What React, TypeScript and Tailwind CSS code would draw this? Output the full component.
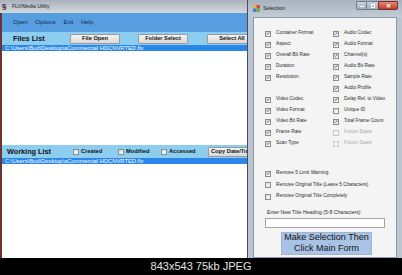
import React from 'react'

type Item = { label: string; checked?: boolean; disabled?: boolean } | null

const leftCol: Item[] = [
  { label: 'Container Format', checked: true },
  { label: 'Aspect', checked: true },
  { label: 'Overall Bit Rate', checked: true },
  { label: 'Duration', checked: true },
  { label: 'Resolution', checked: true },
  null,
  { label: 'Video Codec', checked: true },
  { label: 'Video Format', checked: true },
  { label: 'Video Bit Rate', checked: true },
  { label: 'Frame Rate', checked: true },
  { label: 'Scan Type', checked: true },
]

const rightCol: Item[] = [
  { label: 'Audio Codec', checked: true },
  { label: 'Audio Format', checked: true },
  { label: 'Channel(s)', checked: true },
  { label: 'Audio Bit Rate', checked: true },
  { label: 'Sample Rate', checked: true },
  { label: 'Audio Profile', checked: true },
  { label: 'Delay Rel. to Video', checked: true },
  { label: 'Unique ID' },
  { label: 'Total Frame Count', checked: true },
  { label: 'Future Spare', disabled: true },
  { label: 'Future Spare', disabled: true },
]

const path = 'C:\\Users\\Bud\\Desktop\\aCommercial HDCNVRTED.flv'

function Box({ checked, disabled }: { checked?: boolean; disabled?: boolean }) {
  return (
    <span
      className={`flex h-[6px] w-[6px] shrink-0 items-center justify-center border ${
        disabled ? 'border-[#c8c8c8] bg-[#f4f4f4]' : 'border-[#8c8c8c] bg-gradient-to-br from-[#dcdcdc] to-white'
      }`}
    >
      {checked && (
        <svg viewBox="0 0 6 6" className="h-[5px] w-[5px]">
          <path d="M1 3.1 L2.4 4.6 L5 1.2" stroke="#2f3d58" strokeWidth="1.1" fill="none" />
        </svg>
      )}
    </span>
  )
}

function Check({ item }: { item: Item }) {
  if (!item) return <div className="h-[11px]" />
  return (
    <div className="flex h-[11px] items-center gap-[5px]">
      <Box checked={item.checked} disabled={item.disabled} />
      <span className={`text-[4.8px] leading-none ${item.disabled ? 'text-[#a8a8a8]' : 'text-[#2b2b2b]'}`}>{item.label}</span>
    </div>
  )
}

function WinButton({ label, className }: { label: string; className: string }) {
  return (
    <div
      className={`flex h-[10px] shrink-0 items-center justify-center rounded-[1px] border border-[#9a9a9a] bg-gradient-to-b from-[#f4f4f4] to-[#d9d9d9] text-[5.7px] font-bold text-[#111] ${className}`}
    >
      {label}
    </div>
  )
}

function MainWindow() {
  return (
    <div className="flex h-[258px] w-[247px] shrink-0 flex-col overflow-hidden">
      {/* title bar */}
      <div className="flex h-[13px] items-center bg-gradient-to-b from-[#a9b2bc] to-[#d4d8dd] pl-[2px]">
        <span className="w-[10px] text-[8px] font-bold leading-none text-[#3a1a1a]">§</span>
        <span className="text-[5px] leading-none text-[#1c1c1c]">FLV/Media Utility</span>
      </div>
      <div className="flex flex-1 border-l-2 border-[#6a3434]">
        <div className="flex flex-1 flex-col">
          {/* menu */}
          <div className="flex h-[19px] items-center gap-[7.5px] bg-[#569ee0] pl-[11px] text-[6px] text-[#17284a]">
            <span>Open</span>
            <span>Options</span>
            <span>Exit</span>
            <span>Help</span>
          </div>
          {/* files list header */}
          <div className="flex h-[13px] items-center bg-[#8ccdf0] pl-[11px]">
            <span className="w-[57px] shrink-0 text-[7.3px] font-bold leading-none text-[#111]">Files List</span>
            <WinButton label="File Open" className="w-[50px]" />
            <WinButton label="Folder Select" className="ml-[18px] w-[50px]" />
            <WinButton label="Select All" className="ml-[19px] w-[50px]" />
          </div>
          <div className="h-[6px] bg-[#2a86e8] pl-[3px] text-[5.8px] leading-[6px] text-white">{path}</div>
          <div className="flex-1 bg-white" />
          {/* working list header */}
          <div className="flex h-[13px] items-center bg-[#8ccdf0] pl-[5px]">
            <span className="w-[66px] shrink-0 text-[7.3px] font-bold leading-none text-[#111]">Working List</span>
            {[
              ['Created', 'w-[45px]'],
              ['Modified', 'w-[43px]'],
              ['Accessed', 'w-[47px]'],
            ].map(([l, w]) => (
              <div key={l} className={`flex shrink-0 items-center gap-[2px] ${w}`}>
                <Box />
                <span className="text-[5.7px] font-semibold leading-none text-[#111]">{l}</span>
              </div>
            ))}
            <WinButton label="Copy Date/Time" className="w-[50px] justify-start pl-[2px]" />
          </div>
          <div className="h-[6px] bg-[#2a86e8] pl-[3px] text-[5.8px] leading-[6px] text-white">{path}</div>
          <div className="flex-1 bg-white" />
        </div>
      </div>
    </div>
  )
}

function SelectionWindow() {
  return (
    <div className="flex h-[258px] flex-1 flex-col border-l border-[#454f5a] bg-[#bac5d1]">
      {/* title bar */}
      <div className="flex h-[17px] shrink-0 items-start bg-gradient-to-b from-[#a7b3c0] to-[#c3ccd6] pr-[4px]">
        <svg viewBox="0 0 8 8" className="ml-[5px] mt-[5px] h-[7px] w-[7px]">
          <rect x="0" y="0" width="4" height="4" fill="#e2b23a" />
          <rect x="4" y="0" width="4" height="4" fill="#d8463a" />
          <rect x="0" y="4" width="4" height="4" fill="#3c7fd0" />
          <rect x="4" y="4" width="4" height="4" fill="#6bb34a" />
        </svg>
        <span className="ml-[3px] mt-[6px] text-[5.4px] leading-none text-[#1c1c1c]">Selection</span>
        <div className="ml-auto mt-[1px] flex h-[9px]">
          <div className="flex w-[11px] items-center justify-center rounded-bl-[2px] border border-[#6e7a88] bg-gradient-to-b from-[#c9d2dc] to-[#a3afbd]">
            <span className="mt-[2px] h-[1px] w-[4px] bg-white" />
          </div>
          <div className="flex w-[11px] items-center justify-center border-y border-[#6e7a88] bg-gradient-to-b from-[#c9d2dc] to-[#a3afbd]">
            <span className="h-[4px] w-[4px] border border-white" />
          </div>
          <div className="flex w-[20px] items-center justify-center rounded-br-[2px] border border-[#7a2a22] bg-gradient-to-b from-[#e0897c] to-[#c0392b] text-[6px] font-bold leading-none text-white">
            ✕
          </div>
        </div>
      </div>
      {/* client area */}
      <div className="mx-[5px] flex flex-1 flex-col border border-[#8e99a5] bg-[#f4f4f4] pl-[11px] pt-[10px]">
        <div className="grid grid-cols-[68px_1fr]">
          {leftCol.map((l, i) => (
            <React.Fragment key={i}>
              <Check item={l} />
              <Check item={rightCol[i]} />
            </React.Fragment>
          ))}
        </div>
        <div className="mt-[19px] flex flex-col">
          {[
            { label: 'Remove 5 Limit Warning', checked: true },
            { label: 'Remove Original Title (Leave 5 Characters)' },
            { label: 'Remove Original Title Completely' },
          ].map((it) => (
            <div key={it.label} className="flex h-[11.5px] items-center gap-[5px]">
              <Box checked={it.checked} />
              <span className="text-[4.8px] leading-none text-[#2b2b2b]">{it.label}</span>
            </div>
          ))}
        </div>
        <div className="ml-[2px] mt-[6px] text-[5.1px] leading-[6px] text-[#2b2b2b]">
          Enter New Title Heading (5-8 Characters)
        </div>
        <div className="mt-[3px] h-[10px] w-[120px] border border-[#a4a4a4] bg-white" />
        <div className="ml-[16px] mt-[4px] flex h-[23px] w-[91px] flex-col items-center justify-center border border-[#9fb4d0] bg-[#a8c3e6] text-[9px] leading-[11px] text-[#141414] [font-family:'Liberation_Sans',Arial,sans-serif]">
          <span>Make Selection Then</span>
          <span>Click Main Form</span>
        </div>
      </div>
    </div>
  )
}

export default function App() {
  return (
    <div className="flex h-[275px] w-[402px] flex-col overflow-hidden bg-black [font-family:'Liberation_Sans',Arial,sans-serif]">
      <div className="flex h-[258px] shrink-0">
        <MainWindow />
        <SelectionWindow />
      </div>
      <div className="flex h-[17px] items-center justify-center bg-black text-[11px] leading-none text-[#e4e4e4]">
        843x543 75kb JPEG
      </div>
    </div>
  )
}
